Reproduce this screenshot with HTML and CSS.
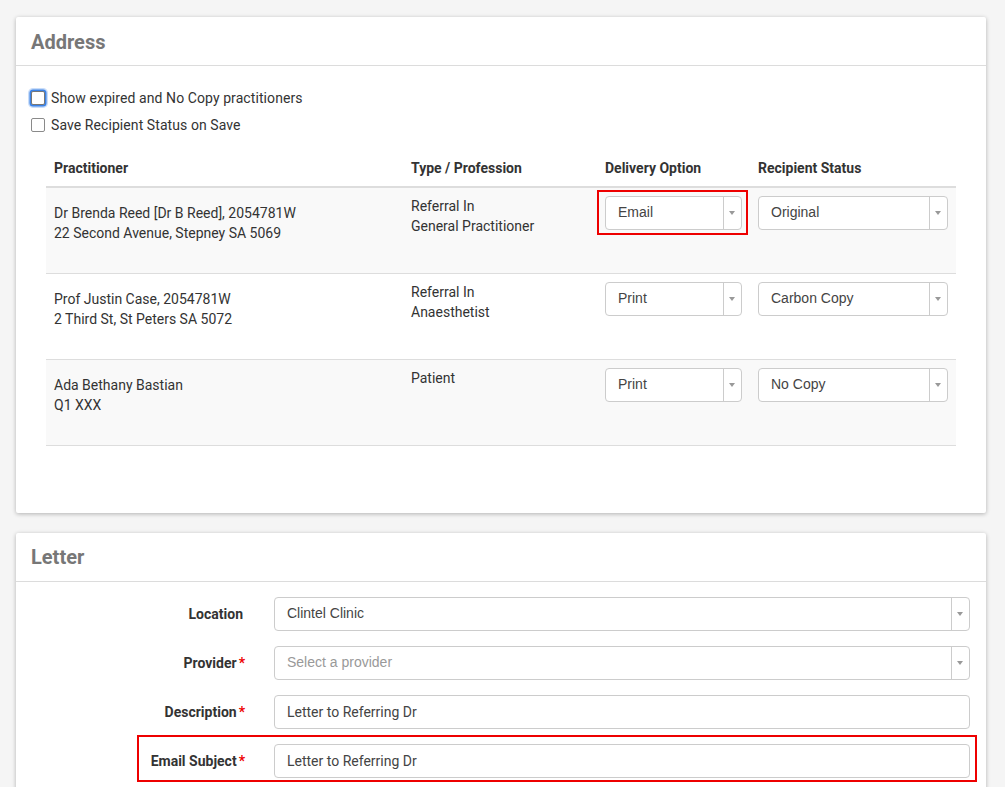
FILE: index.html
```html
<!DOCTYPE html>
<html>
<head>
<meta charset="utf-8">
<link rel="stylesheet" href="styles.css">
</head>
<body>
<div class="page">
  <section class="card">
    <div class="card-header"><h2>Address</h2></div>
    <div class="card-body address-body">
      <label class="check"><span class="box focused"></span>Show expired and No Copy practitioners</label>
      <label class="check"><span class="box"></span>Save Recipient Status on Save</label>
      <table class="grid">
        <colgroup>
          <col class="c1"><col class="c2"><col class="c3"><col class="c4">
        </colgroup>
        <thead>
          <tr><th>Practitioner</th><th>Type / Profession</th><th>Delivery Option</th><th>Recipient Status</th></tr>
        </thead>
        <tbody>
          <tr class="odd">
            <td class="prac">Dr Brenda Reed [Dr B Reed], 2054781W<br>22 Second Avenue, Stepney SA 5069</td>
            <td>Referral In<br>General Practitioner</td>
            <td><div class="sel highlight"><span class="val">Email</span><span class="arrow"></span></div></td>
            <td><div class="sel"><span class="val">Original</span><span class="arrow"></span></div></td>
          </tr>
          <tr>
            <td class="prac">Prof Justin Case, 2054781W<br>2 Third St, St Peters SA 5072</td>
            <td>Referral In<br>Anaesthetist</td>
            <td><div class="sel"><span class="val">Print</span><span class="arrow"></span></div></td>
            <td><div class="sel"><span class="val">Carbon Copy</span><span class="arrow"></span></div></td>
          </tr>
          <tr class="odd">
            <td class="prac">Ada Bethany Bastian<br>Q1 XXX</td>
            <td>Patient</td>
            <td><div class="sel"><span class="val">Print</span><span class="arrow"></span></div></td>
            <td><div class="sel"><span class="val">No Copy</span><span class="arrow"></span></div></td>
          </tr>
        </tbody>
      </table>
    </div>
  </section>

  <section class="card">
    <div class="card-header"><h2>Letter</h2></div>
    <div class="card-body letter-body">
      <div class="frow">
        <label class="flabel plain">Location</label>
        <div class="sel wide"><span class="val">Clintel Clinic</span><span class="arrow"></span></div>
      </div>
      <div class="frow">
        <label class="flabel">Provider<span class="req">*</span></label>
        <div class="sel wide"><span class="val ph">Select a provider</span><span class="arrow"></span></div>
      </div>
      <div class="frow">
        <label class="flabel">Description<span class="req">*</span></label>
        <div class="input">Letter to Referring Dr</div>
      </div>
      <div class="frow highlight-row">
        <label class="flabel">Email Subject<span class="req">*</span></label>
        <div class="input">Letter to Referring Dr</div>
      </div>
    </div>
  </section>
</div>
</body>
</html>
```

FILE: styles.css
```css
* { box-sizing: border-box; }
html, body { margin: 0; padding: 0; }
body {
  background: #f5f5f5;
  font-family: Roboto, "Liberation Sans", sans-serif;
  font-size: 14px;
  line-height: 20px;
  color: #333;
  overflow: hidden;
}
.page {
  padding: 17px 19px 0 16px;
  display: flex;
  flex-direction: column;
  gap: 20px;
}
.card {
  background: #fff;
  box-shadow: 0 1px 4px rgba(0,0,0,0.28);
  border-radius: 2px;
}
.card-header {
  height: 49px;
  border-bottom: 1px solid #dcdcdc;
  padding: 1px 15px 0 15px;
  display: flex;
  align-items: center;
}
.card-header h2 {
  margin: 0;
  font-size: 20px;
  font-weight: 700;
  color: #777;
  line-height: 24px;
}
.address-body {
  padding: 22px 15px 67px 15px;
}
.check {
  display: flex;
  align-items: center;
  height: 20px;
  margin-bottom: 7px;
  color: #333;
  letter-spacing: 0.08px;
}
.box {
  width: 14px;
  height: 14px;
  border: 1px solid #8a8a8a;
  border-radius: 2px;
  margin-right: 6px;
  background: #fff;
}
.box.focused {
  border-color: #777;
  box-shadow: 0 0 0 1.5px #3b82e6, 0 0 0 3px rgba(120,170,240,0.4);
}
.grid {
  width: 910px;
  margin: 15px 15px 0 15px;
  border-collapse: collapse;
  table-layout: fixed;
}
.c1 { width: 357px; }
.c2 { width: 194px; }
.c3 { width: 153px; }
.c4 { width: 206px; }
.grid th {
  text-align: left;
  font-weight: 700;
  padding: 8px 8px;
  border-bottom: 2px solid #ddd;
  line-height: 20px;
}
.grid td {
  vertical-align: top;
  padding: 8px 8px 0 8px;
  height: 86px;
  border-top: 1px solid #ddd;
}
.grid tbody tr:first-child td { border-top: 0; height: 86px; }
.grid tbody tr:last-child td { border-bottom: 1px solid #ddd; }
.grid td.prac { padding-top: 15px; }
.grid tr.odd td { background: #f9f9f9; }
.sel {
  position: relative;
  height: 34px;
  border: 1px solid #ccc;
  border-radius: 4px;
  background: #fff;
  display: flex;
  align-items: stretch;
  font-family: "Liberation Sans", Arial, sans-serif;
  color: #444;
}
.sel .val {
  flex: 1;
  padding: 0 12px;
  line-height: 30px;
  white-space: nowrap;
  overflow: hidden;
}
.sel .val.ph { color: #999; }
.sel .arrow {
  width: 18px;
  border-left: 1px solid #ccc;
  position: relative;
}
.sel .arrow::after {
  content: "";
  position: absolute;
  left: 5px;
  top: 14px;
  border-left: 3.5px solid transparent;
  border-right: 3.5px solid transparent;
  border-top: 4px solid #999;
}
.sel.highlight::before {
  content: "";
  position: absolute;
  left: -9px;
  top: -7px;
  right: -7px;
  bottom: -6px;
  border: 2px solid #e00;
  pointer-events: none;
}
.letter-body {
  padding: 15px 16px 20px 0;
}
.frow {
  position: relative;
  display: flex;
  align-items: center;
  margin-bottom: 15px;
}
.flabel {
  width: 229px;
  margin-right: 29px;
  text-align: right;
  font-weight: 700;
  color: #333;
}
.flabel.plain { padding-right: 2px; }
.req { color: #e00; margin-left: 2px; }
.frow .sel, .frow .input { flex: 1; }
.input {
  height: 34px;
  border: 1px solid #ccc;
  border-radius: 4px;
  padding: 0 12px;
  line-height: 32px;
  color: #444;
  background: #fff;
}
.highlight-row::after {
  content: "";
  position: absolute;
  left: 121px;
  top: -9px;
  right: -7px;
  bottom: -4px;
  border: 2px solid #e00;
  pointer-events: none;
}
```
